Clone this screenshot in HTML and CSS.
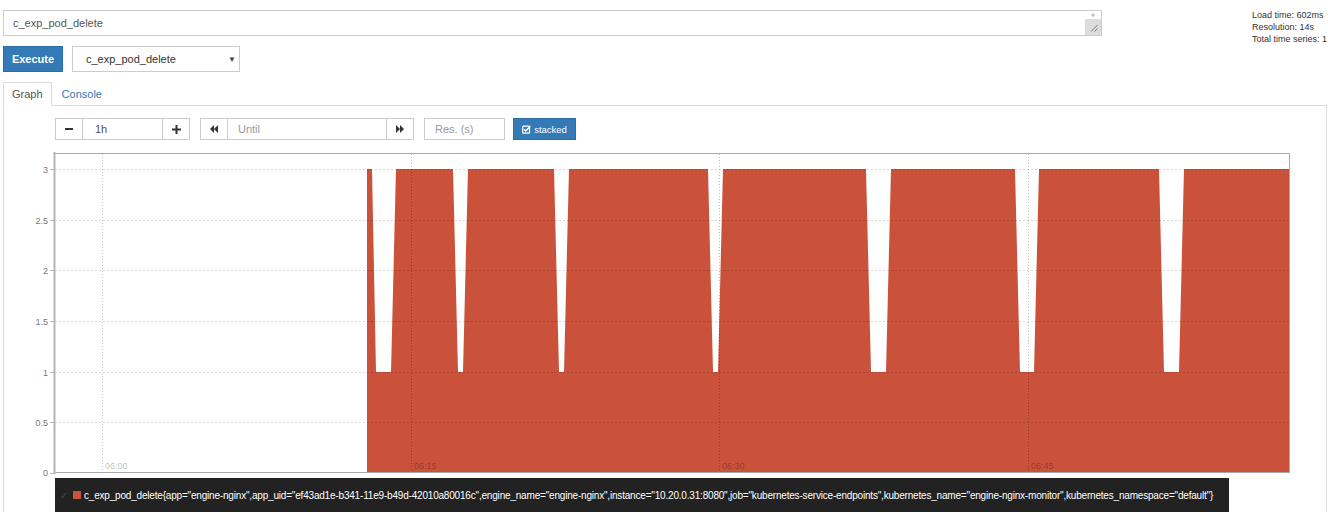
FILE: index.html
```html
<!DOCTYPE html>
<html>
<head>
<meta charset="utf-8">
<link rel="stylesheet" href="styles.css">
</head>
<body>
<div class="page">
  <div class="expr-row">
    <div class="expr">
      <span class="expr-text">c_exp_pod_delete</span>
      <span class="grip">
        <span class="grip-top"><svg width="6" height="6" viewBox="0 0 6 6"><circle cx="3" cy="3" r="1.6" fill="#bbb"/></svg></span>
        <span class="grip-bottom"><svg width="15" height="16" viewBox="0 0 15 16"><path d="M12.5 6 L6 12.5 M12.5 9.5 L9.5 12.5" stroke="#777" stroke-width="1"/></svg></span>
      </span>
    </div>
    <div class="stats">
      <div>Load time: 602ms</div>
      <div>Resolution: 14s</div>
      <div>Total time series: 1</div>
    </div>
  </div>

  <div class="exec-row">
    <button class="btn-exec">Execute</button>
    <div class="select"><span>c_exp_pod_delete</span><span class="caret">&#9660;</span></div>
  </div>

  <div class="tabs">
    <span class="tab active">Graph</span>
    <span class="tab">Console</span>
  </div>

  <div class="tab-content">
    <div class="controls">
      <div class="group">
        <span class="btn-ctl"><svg width="8" height="8" viewBox="0 0 8 8"><rect x="0" y="3" width="8" height="2" fill="#333"/></svg></span>
        <span class="inp w80">1h</span>
        <span class="btn-ctl"><svg width="9" height="9" viewBox="0 0 9 9"><rect x="0" y="3.5" width="9" height="2" fill="#333"/><rect x="3.5" y="0" width="2" height="9" fill="#333"/></svg></span>
      </div>
      <div class="group">
        <span class="btn-ctl"><svg width="8" height="8" viewBox="0 0 8 8"><path d="M4 0 L0 4 L4 8 Z M8 0 L4 4 L8 8 Z" fill="#333"/></svg></span>
        <span class="inp w159 ph">Until</span>
        <span class="btn-ctl"><svg width="8" height="8" viewBox="0 0 8 8"><path d="M0 0 L4 4 L0 8 Z M4 0 L8 4 L4 8 Z" fill="#333"/></svg></span>
      </div>
      <span class="inp w80 ph solo">Res. (s)</span>
      <button class="btn-stacked"><svg width="9" height="9" viewBox="0 0 9 9"><rect x="0.7" y="1.2" width="6.8" height="7" rx="1" fill="none" stroke="#fff" stroke-width="1.3"/><path d="M2.2 4.4 L3.9 6 L8.3 1" fill="none" stroke="#fff" stroke-width="1.5"/></svg>stacked</button>
    </div>

    <div class="graph">
      <svg class="chart" width="1323" height="332" viewBox="4 146 1323 332">
        <polygon fill="#ca513a" points="367,473 367,169 372,169 376,372 391,372 396,169 453,169 458,372 463,372 468,169 554,169 559,372 564,372 569,169 708,169 713,372 718,372 723,169 866,169 871,372 886,372 891,169 1015,169 1020,372 1034,372 1039,169 1159,169 1164,372 1179,372 1184,169 1289,169 1289,473"/>
        <g stroke="rgba(0,0,0,0.15)" stroke-width="1" stroke-dasharray="2,2">
          <line x1="55" y1="169.5" x2="1289" y2="169.5"/>
          <line x1="55" y1="220.5" x2="1289" y2="220.5"/>
          <line x1="55" y1="270.5" x2="1289" y2="270.5"/>
          <line x1="55" y1="321.5" x2="1289" y2="321.5"/>
          <line x1="55" y1="372.5" x2="1289" y2="372.5"/>
          <line x1="55" y1="422.5" x2="1289" y2="422.5"/>
        </g>
        <g stroke="rgba(0,0,0,0.25)" stroke-width="1" stroke-dasharray="1,2">
          <line x1="102.5" y1="154" x2="102.5" y2="473"/>
          <line x1="411.5" y1="154" x2="411.5" y2="473"/>
          <line x1="719.5" y1="154" x2="719.5" y2="473"/>
          <line x1="1028.5" y1="154" x2="1028.5" y2="473"/>
        </g>
        <g class="xlab" fill="rgba(0,0,0,0.28)">
          <text x="105" y="469">06:00</text>
          <text x="414" y="469">06:15</text>
          <text x="722" y="469">06:30</text>
          <text x="1031" y="469">06:45</text>
        </g>
        <g stroke="#aaa" stroke-width="1" fill="none">
          <line x1="54" y1="153.5" x2="1289.5" y2="153.5"/>
          <line x1="1289.5" y1="153.5" x2="1289.5" y2="473"/>
          <line x1="54" y1="472.5" x2="1289.5" y2="472.5"/>
        </g>
        <line x1="54.5" y1="152" x2="54.5" y2="474" stroke="#b5b5b5" stroke-width="2"/>
        <g stroke="#b5b5b5" stroke-width="1">
          <line x1="50" y1="169.5" x2="54" y2="169.5"/>
          <line x1="50" y1="220.5" x2="54" y2="220.5"/>
          <line x1="50" y1="270.5" x2="54" y2="270.5"/>
          <line x1="50" y1="321.5" x2="54" y2="321.5"/>
          <line x1="50" y1="372.5" x2="54" y2="372.5"/>
          <line x1="50" y1="422.5" x2="54" y2="422.5"/>
          <line x1="50" y1="473.5" x2="54" y2="473.5"/>
        </g>
        <g class="ylab" fill="#777" text-anchor="end">
          <text x="48" y="172.5">3</text>
          <text x="48" y="223.5">2.5</text>
          <text x="48" y="273.5">2</text>
          <text x="48" y="324.5">1.5</text>
          <text x="48" y="375.5">1</text>
          <text x="48" y="425.5">0.5</text>
          <text x="48" y="476">0</text>
        </g>
      </svg>
    </div>

    <div class="legend">
      <span class="check">&#10003;</span>
      <span class="swatch"></span>
      <span class="label">c_exp_pod_delete{app="engine-nginx",app_uid="ef43ad1e-b341-11e9-b49d-42010a80016c",engine_name="engine-nginx",instance="10.20.0.31:8080",job="kubernetes-service-endpoints",kubernetes_name="engine-nginx-monitor",kubernetes_namespace="default"}</span>
    </div>
  </div>
</div>
</body>
</html>
```

FILE: styles.css
```css
* { box-sizing: border-box; }

html, body {
  margin: 0;
  padding: 0;
  background: #fff;
  overflow: hidden;
}

body {
  font-family: "Liberation Sans", Arial, sans-serif;
  font-size: 11px;
  color: #333;
}

.page {
  padding: 10px 1px 0 3px;
  height: 512px;
}

.expr-row {
  display: flex;
  align-items: flex-start;
  height: 26px;
}

.expr {
  position: relative;
  width: 1100px;
  height: 26px;
  border: 1px solid #ccc;
  display: flex;
  align-items: center;
  padding-left: 9px;
  color: #555;
}

.grip {
  position: absolute;
  right: 0;
  top: 0;
  width: 16px;
  height: 24px;
  display: flex;
  flex-direction: column;
}

.grip-top {
  height: 8px;
  display: flex;
  justify-content: center;
  align-items: center;
  background: #fff;
}

.grip-bottom {
  flex: 1;
  background: #dcdcdc;
  display: flex;
}

.stats {
  margin-left: 150px;
  margin-top: -1px;
  height: 26px;
  font-size: 9px;
  line-height: 12px;
  color: #333;
  white-space: nowrap;
}

.exec-row {
  display: flex;
  gap: 9px;
  margin-top: 10px;
}

.btn-exec {
  width: 60px;
  height: 26px;
  background: #337ab7;
  border: 1px solid #2e6da4;
  border-radius: 0;
  color: #fff;
  font-family: inherit;
  font-size: 11px;
  font-weight: bold;
  padding: 0;
}

.select {
  width: 168px;
  height: 26px;
  border: 1px solid #ccc;
  display: flex;
  align-items: center;
  justify-content: space-between;
  padding: 0 3px 0 13px;
  color: #333;
}

.caret {
  font-size: 8px;
  color: #444;
}

.tabs {
  display: flex;
  margin-top: 10px;
  border-bottom: 1px solid #ddd;
  height: 24px;
}

.tab {
  height: 24px;
  padding: 0 8px;
  margin-right: 1px;
  line-height: 22px;
  color: #337ab7;
  border: 1px solid transparent;
}

.tab.active {
  color: #555;
  background: #fff;
  border-color: #ddd #ddd #fff #ddd;
  height: 24px;
  margin-bottom: -1px;
}

.tab-content {
  border-left: 1px solid #ddd;
  border-right: 1px solid #ddd;
  height: 420px;
}

.controls {
  display: flex;
  align-items: center;
  padding: 12px 0 0 51px;
  height: 34px;
}

.group {
  display: flex;
  margin-right: 10px;
}

.btn-ctl {
  width: 28px;
  height: 22px;
  border: 1px solid #ccc;
  display: flex;
  align-items: center;
  justify-content: center;
  background: #fff;
}

.group .btn-ctl:last-child { margin-left: -1px; }
.group .inp { margin-left: -1px; }

.inp {
  height: 22px;
  border: 1px solid #ccc;
  display: flex;
  align-items: center;
  padding-left: 12px;
  color: #555;
}

.inp.ph { color: #999; padding-left: 10px; }
.inp.solo { margin-right: 8px; }

.w80 { width: 81px; }
.w159 { width: 160px; }

.btn-stacked {
  width: 63px;
  height: 22px;
  background: #337ab7;
  border: 1px solid #2e6da4;
  border-radius: 0;
  color: #fff;
  font-family: inherit;
  font-size: 9.5px;
  display: flex;
  align-items: center;
  justify-content: center;
  gap: 3px;
  padding: 0;
}

.graph {
  margin-top: 6px;
  height: 332px;
}

.chart {
  display: block;
  font-family: "Liberation Sans", Arial, sans-serif;
}

.xlab { font-size: 9px; }
.ylab { font-size: 9px; }

.legend {
  display: inline-flex;
  align-items: center;
  margin-left: 51px;
  height: 36px;
  padding: 0 16px 2px 5px;
  background: #222;
  color: #fff;
  white-space: nowrap;
  font-size: 10px;
}

.check {
  color: #3a4a5a;
  font-size: 10px;
  width: 13px;
}

.swatch {
  width: 8px;
  height: 8px;
  background: #ca513a;
  margin-right: 3px;
}

.label {
  letter-spacing: -0.19px;
}
```
